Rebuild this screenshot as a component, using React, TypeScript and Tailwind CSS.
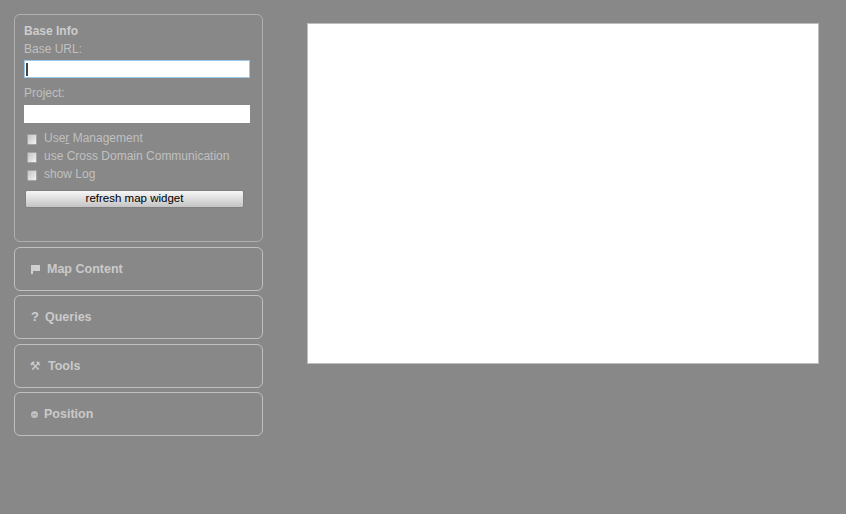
import React from "react";

function Accordion({ icon, label, gap, top }: { icon: React.ReactNode; label: string; gap: string; top: string }) {
    return (
        <div className={`${top} h-[44px] rounded-[6px] border border-[#c0c0c0] pl-[15px] flex items-center`}>
            <span className="w-[10px] flex justify-center text-[#cfcfcf]">{icon}</span>
            <span className={`${gap} text-[12.5px] leading-[16px] font-bold text-[#cacaca]`}>{label}</span>
        </div>
    );
}

function Check({ label }: { label: React.ReactNode }) {
    return (
        <label className="h-[18px] flex items-center pl-[3px] text-[12px] text-[#c0c0c0]">
            <span className="mt-[2px] w-[10px] h-[11px] border border-[#a4a4a4] rounded-[1px] bg-gradient-to-br from-[#c4c4c4] to-[#f4f4f4]"></span>
            <span className="ml-[7px]">{label}</span>
        </label>
    );
}

export default function App() {
    return (
        <div className="w-[846px] h-[514px] bg-[#888888] flex font-['Liberation_Sans',Arial,sans-serif] overflow-hidden">
            <div className="ml-[14px] mt-[14px] w-[249px] flex flex-col">
                <div className="h-[228px] rounded-[6px] border border-[#b0b0b0] px-[9px] pt-[9px]">
                    <div className="text-[12px] leading-[14px] font-bold text-[#cdcdcd]">Base Info</div>
                    <div className="mt-[3px] text-[12px] leading-[16px] text-[#c0c0c0]">Base URL:</div>
                    <div className="mt-[3px] w-[226px] h-[18px] bg-white border border-[#9cc7e6] pl-[1px] flex items-center">
                        <span className="w-[2px] h-[13px] bg-[#444444]"></span>
                    </div>
                    <div className="mt-[8px] text-[12px] leading-[14px] text-[#c0c0c0]">Project:</div>
                    <div className="mt-[5px] w-[226px] h-[18px] bg-white"></div>
                    <div className="mt-[6px] flex flex-col">
                        <Check label={<>Use<span className="underline">r</span> Management</>} />
                        <Check label="use Cross Domain Communication" />
                        <Check label="show Log" />
                    </div>
                    <button className="mt-[7px] ml-[1px] w-[219px] h-[18px] pb-[2px] rounded-[2px] border border-[#808080] bg-gradient-to-b from-[#f6f6f6] to-[#c4c4c4] text-[11.5px] leading-[14px] text-black">
                        refresh map widget
                    </button>
                </div>
                <Accordion
                    top="mt-[5px]"
                    label="Map Content"
                    gap="ml-[7px]"
                    icon={
                        <svg width="9" height="9" viewBox="0 0 9 9" fill="currentColor">
                            <path d="M0 0h9v6H2v3H0z" />
                        </svg>
                    }
                />
                <Accordion top="mt-[4px]" label="Queries" gap="ml-[5px]" icon={<span className="text-[13px] font-bold">?</span>} />
                <Accordion
                    top="mt-[5px]"
                    label="Tools"
                    gap="ml-[8px]"
                    icon={<span className="font-['DejaVu_Sans'] text-[12px] leading-[14px]">⚒</span>}
                />
                <Accordion
                    top="mt-[4px]"
                    label="Position"
                    gap="ml-[4px]"
                    icon={
                        <svg className="-ml-[2px]" width="7" height="7" viewBox="0 0 7 7" fill="currentColor">
                            <path fillOpacity="0.8" d="M3.5 0a3.5 3.5 0 1 1 0 7 3.5 3.5 0 0 1 0-7z" />
                            <path fill="#8f8f8f" d="M1.5 3.4h4v0.8h-4z" />
                        </svg>
                    }
                />
            </div>
            <div className="ml-[44px] mt-[23px] w-[512px] h-[341px] bg-white border border-[#bdbdbd]"></div>
        </div>
    );
}
